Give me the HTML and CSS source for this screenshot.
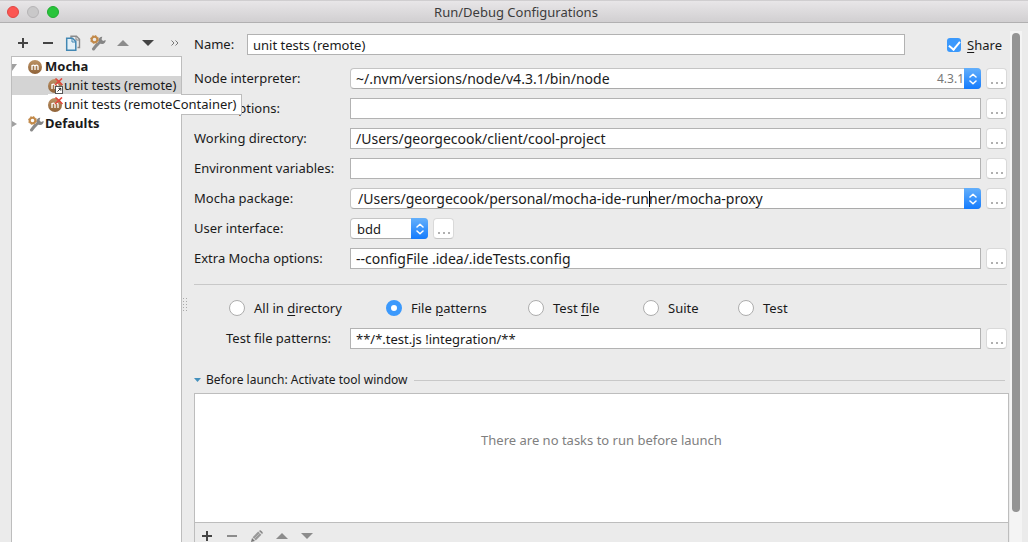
FILE: index.html
```html
<!DOCTYPE html>
<html lang="en">
<head>
<meta charset="utf-8">
<title>Run/Debug Configurations</title>
<link rel="stylesheet" href="styles.css">
</head>
<body>
<svg class="defs" aria-hidden="true">
  <defs>
    <linearGradient id="brown" x1="0" y1="0" x2="0" y2="1"><stop offset="0" stop-color="#bd9365"/><stop offset="1" stop-color="#8f6238"/></linearGradient>
    <symbol id="mocha" viewBox="0 0 14 14"><circle cx="7" cy="7" r="7" fill="url(#brown)"/><path d="M4 10V5M4 6.6Q4 5.2 5.4 5.2T7 6.6V10M7 6.6Q7 5.2 8.5 5.2T10 6.6V10" fill="none" stroke="#fff" stroke-width="1.3"/></symbol>
    <symbol id="mocha-x" viewBox="0 0 16 16"><circle cx="7" cy="8" r="7" fill="url(#brown)"/><path d="M4 11V6M4 7.6Q4 6.2 5.4 6.2T7 7.6V11M7 7.6Q7 6.2 8.500 6.2T10 7.6V11" fill="none" stroke="#fff" stroke-width="1.3"/><path d="M7.500 .5L14.500 7M14 .5L7 7" stroke="#e0463c" stroke-width="1.600"/></symbol>
    <symbol id="tools" viewBox="0 0 16 16"><path d="M7 9.500L3.500 14" stroke="#8a8a8a" stroke-width="3" stroke-linecap="round"/><path d="M6.500 10.500L11.500 5.500" stroke="#8a8a8a" stroke-width="2.600"/><path d="M15.600 5A3.600 3.600 0 1 1 12.300 1.800L11.500 4.300L13 5.900Z" fill="#858585"/><circle cx="4.500" cy="4.500" r="2.800" fill="none" stroke="#c28a4a" stroke-width="2"/><circle cx="4.500" cy="4.500" r="4" fill="none" stroke="#c28a4a" stroke-width="1" stroke-dasharray="1.600 1.540"/></symbol>
    <symbol id="plus" viewBox="0 0 10 10"><path d="M5 0V10M0 5H10" stroke="currentColor" stroke-width="2"/></symbol>
    <symbol id="minus" viewBox="0 0 10 10"><path d="M0 5H10" stroke="currentColor" stroke-width="2"/></symbol>
    <symbol id="up" viewBox="0 0 12 6"><path d="M6 0L12 6H0Z" fill="currentColor"/></symbol>
    <symbol id="down" viewBox="0 0 12 6"><path d="M0 0H12L6 6Z" fill="currentColor"/></symbol>
    <symbol id="updown" viewBox="0 0 8 12"><path d="M1 4L4 1.200L7 4M1 8L4 10.800L7 8" fill="none" stroke="#fff" stroke-width="1.500" stroke-linecap="round" stroke-linejoin="round"/></symbol>
  </defs>
</svg>
<div class="window">
  <header class="titlebar">
    <div class="lights"><button class="light red" aria-label="Close"></button><button class="light off" aria-label="Minimize" disabled></button><button class="light green" aria-label="Zoom"></button></div>
    <h1 class="title">Run/Debug Configurations</h1>
  </header>
  <div class="content">
    <aside class="sidebar">
      <div class="toolbar">
        <button class="tool" aria-label="Add"><svg class="i10"><use href="#plus"/></svg></button>
        <button class="tool" aria-label="Remove"><svg class="i10"><use href="#minus"/></svg></button>
        <button class="tool" aria-label="Copy"><svg class="i16" viewBox="0 0 16 16"><path d="M6 3V1.200H11.500L14.500 4.200V12.500H12.500" fill="none" stroke="#8b8b8b" stroke-width="1.400"/><path d="M11 1.500V5H14.500" fill="none" stroke="#8b8b8b"/><path d="M1.700 3.200H7.500L10.800 6.500V15.200H1.700Z" fill="#e4f0f7" stroke="#4287b3" stroke-width="1.500"/><path d="M7 3.500V7H10.500" fill="none" stroke="#4287b3"/></svg></button>
        <button class="tool" aria-label="Edit defaults"><svg class="i16"><use href="#tools"/></svg></button>
        <button class="tool dim" aria-label="Move up"><svg class="arrow"><use href="#up"/></svg></button>
        <button class="tool" aria-label="Move down"><svg class="arrow"><use href="#down"/></svg></button>
        <button class="tool more" aria-label="More"><svg class="chev" viewBox="0 0 8 6"><path d="M.5 .5L3 3L.5 5.500M4.500 .5L7 3L4.500 5.500" fill="none" stroke="#777"/></svg></button>
      </div>
      <ul class="tree">
        <li class="node bold"><svg class="twist" viewBox="0 0 6 8"><path d="M0 1H5L0 8Z" fill="#a0a0a0"/></svg><svg class="i14"><use href="#mocha"/></svg><span>Mocha</span></li>
        <li class="node child selected"><svg class="i16" viewBox="0 0 16 16"><use href="#mocha-x" width="16" height="16"/><rect x="7.500" y="8.500" width="7" height="7" fill="#fff" stroke="#555"/><path d="M9.500 13.500L13 10M10.500 10.300H12.800V12.600" fill="none" stroke="#333"/></svg><span>unit tests (remote)</span></li>
        <li class="node child"><div class="overflow"><svg class="i16"><use href="#mocha-x"/></svg><span>unit tests (remoteContainer)</span></div></li>
        <li class="node bold"><svg class="twist" viewBox="0 0 6 8"><path d="M0 1L5 4L0 7Z" fill="#a0a0a0"/></svg><svg class="i16 wrench"><use href="#tools"/></svg><span>Defaults</span></li>
      </ul>
    </aside>
    <div class="grip" aria-hidden="true"></div>
    <main class="editor">
      <div class="row name-row">
        <label class="name-label" for="name">Name:</label>
        <input class="field" id="name" type="text" value="unit tests (remote)">
        <div class="share"><input class="check" type="checkbox" id="share" checked><label for="share"><u>S</u>hare</label></div>
      </div>
      <div class="form">
        <div class="row"><label class="label" for="node">Node interpreter:</label><div class="combo"><input id="node" type="text" value="~/.nvm/versions/node/v4.3.1/bin/node"><span class="version">4.3.1</span><button class="stepper" aria-label="Choose interpreter"><svg><use href="#updown"/></svg></button></div><button class="browse" aria-label="Browse interpreter"><i></i><i></i><i></i></button></div>
        <div class="row"><label class="label" for="opts">Node options:</label><input class="field" id="opts" type="text"><button class="browse" aria-label="Edit options"><i></i><i></i><i></i></button></div>
        <div class="row"><label class="label" for="dir">Working directory:</label><input class="field" id="dir" type="text" value="/Users/georgecook/client/cool-project"><button class="browse" aria-label="Browse directory"><i></i><i></i><i></i></button></div>
        <div class="row"><label class="label" for="env">Environment variables:</label><input class="field" id="env" type="text"><button class="browse" aria-label="Edit variables"><i></i><i></i><i></i></button></div>
        <div class="row"><label class="label" for="pkg">Mocha package:</label><div class="combo wide-pad"><input id="pkg" type="text" value="/Users/georgecook/personal/mocha-ide-runner/mocha-proxy"><span class="caret"></span><button class="stepper" aria-label="Choose package"><svg><use href="#updown"/></svg></button></div><button class="browse" aria-label="Browse package"><i></i><i></i><i></i></button></div>
        <div class="row"><label class="label" for="ui">User interface:</label><div class="combo small"><select id="ui"><option>bdd</option></select><span class="stepper"><svg><use href="#updown"/></svg></span></div><button class="browse" aria-label="Browse interface"><i></i><i></i><i></i></button></div>
        <div class="row"><label class="label" for="extra">Extra Mocha options:</label><input class="field" id="extra" type="text" value="--configFile .idea/.ideTests.config"><button class="browse" aria-label="Edit Mocha options"><i></i><i></i><i></i></button></div>
      </div>
      <hr class="rule">
      <div class="radios">
        <label class="choice"><input type="radio" name="scope"><span>All in <u>d</u>irectory</span></label>
        <label class="choice"><input type="radio" name="scope" checked><span>File <u>p</u>atterns</span></label>
        <label class="choice"><input type="radio" name="scope"><span>Test <u>f</u>ile</span></label>
        <label class="choice"><input type="radio" name="scope"><span>Suite</span></label>
        <label class="choice"><input type="radio" name="scope"><span>Test</span></label>
      </div>
      <div class="row"><label class="label indent" for="pat">Test file patterns:</label><input class="field" id="pat" type="text" value="**/*.test.js !integration/**"><button class="browse" aria-label="Edit patterns"><i></i><i></i><i></i></button></div>
      <section class="launch">
        <h2 class="launch-title"><svg class="fold" viewBox="0 0 7 4"><path d="M0 0H7L3.500 4Z" fill="#4390bd"/></svg><span>Before launch: Activate tool window</span></h2>
        <div class="tasks">
          <p class="empty">There are no tasks to run before launch</p>
          <div class="task-tools">
            <button class="tool" aria-label="Add task"><svg class="i10"><use href="#plus"/></svg></button>
            <button class="tool dim" aria-label="Remove task"><svg class="i10"><use href="#minus"/></svg></button>
            <button class="tool dim" aria-label="Edit task"><svg class="i12" viewBox="0 0 12 12"><path d="M0 12L1 8L4 11Z" fill="#777"/><path d="M1.600 7.200L7.200 1.600L10.400 4.800L4.800 10.400Z" fill="#999"/><path d="M3.200 8.800L8.800 3.200" stroke="#bbb"/><path d="M8 .9Q9.200-.3 10.400.9L11.200 1.700Q12.300 2.900 11.100 4.100Z" fill="#888"/></svg></button>
            <button class="tool dim" aria-label="Task up"><svg class="arrow"><use href="#up"/></svg></button>
            <button class="tool dim" aria-label="Task down"><svg class="arrow"><use href="#down"/></svg></button>
          </div>
        </div>
      </section>
    </main>
    <div class="scrollbar" aria-hidden="true"><div class="thumb"></div></div>
  </div>
</div>
</body>
</html>
```

FILE: styles.css
```css
* { box-sizing: border-box; }
body { margin: 0; background: #ebebeb; color: #1a1a1a; font: 13px/16px "Noto Sans", sans-serif; overflow: hidden; }
button, input, select { font: inherit; color: inherit; margin: 0; padding: 0; border: 0; background: none; outline: none; }
svg { display: block; flex: none; }
u { text-underline-offset: 2px; }
.defs { position: absolute; width: 0; height: 0; }
.window { display: flex; flex-direction: column; height: 100vh; }

.titlebar { position: relative; flex: none; height: 23px; padding-left: 4px; display: flex; align-items: center; justify-content: center; border-top: 1px solid #d0ced0; border-bottom: 1px solid #b1b0b1; background: linear-gradient(#e8e6e8, #d1cfd1); }
.title { margin: 0; font-size: 13px; font-weight: 400; color: #3c3c3c; }
.lights { position: absolute; left: 7px; display: flex; gap: 8px; }
.light { width: 12px; height: 12px; border-radius: 50%; border: 1px solid; }
.red { background: #fc5652; border-color: #df4744; }
.off { background: #c9c8c9; border-color: #b6b4b6; }
.green { background: #29c43b; border-color: #1fab2f; }

.content { flex: 1; min-height: 0; display: flex; padding-right: 6px; }
.sidebar { flex: none; width: 182px; padding-left: 11px; display: flex; flex-direction: column; }
.toolbar { height: 33px; padding-top: 7px; display: flex; align-items: center; flex: none; }
.tool { width: 25px; height: 16px; padding-right: 2px; display: flex; align-items: center; justify-content: center; color: #444; flex: none; }
.dim { color: #8c8c8c; }
.more { width: 20px; justify-content: flex-end; }
.i10 { width: 10px; height: 10px; }
.i12 { width: 12px; height: 12px; }
.i14 { width: 14px; height: 14px; }
.i16 { width: 16px; height: 16px; }
.arrow { width: 12px; height: 6px; }
.chev { width: 8px; height: 6px; }
.tree { flex: 1; margin: 0; padding: 0; list-style: none; background: #fff; border: 1px solid #bdbdbd; border-bottom: 0; }
.node { position: relative; height: 19px; display: flex; align-items: center; white-space: nowrap; }
.node span, .label, .name-label { padding-bottom: 2px; }
.bold { font-weight: 700; gap: 3px; }
.twist { width: 6px; height: 8px; margin-right: 7px; }
.wrench { margin-right: -2px; }
.child { padding-left: 36px; }
.selected { background: #d4d4d4; }
.overflow { position: absolute; z-index: 2; left: 36px; top: -1px; height: 21px; display: flex; align-items: center; background: #fff; padding-right: 5px; }
.overflow::after { content: ""; position: absolute; left: 133px; right: 0; top: 0; bottom: 0; border: 1px solid #bdbdbd; border-left: 0; }

.grip { flex: none; align-self: center; width: 5px; height: 16px; margin-top: 44px; background: radial-gradient(circle, #aaa 1px, transparent 1px) 0 0 / 3px 3px; }
.editor { flex: 1; min-width: 0; padding: 11px 1px 0 7px; }
.row { display: flex; align-items: center; height: 21px; padding-right: 2px; gap: 5px; }
.name-row { gap: 0; margin-bottom: 13px; padding-right: 7px; }
.name-label { width: 53px; }
.share { display: flex; align-items: center; gap: 6px; margin-left: 42px; }
.form { display: grid; gap: 9px; }
.form input { font-size: 14px; line-height: 19px; }
.label { width: 151px; flex: none; white-space: nowrap; }
.indent { padding-left: 32px; }
.field { flex: 1; min-width: 0; height: 21px; padding: 0 5px; background: #fff; border: 1px solid #b2b2b2; }
.combo { position: relative; flex: 1; min-width: 0; height: 21px; display: flex; align-items: center; background: #fff; border: 1px solid #c4c4c4; border-bottom-color: #aaa; border-radius: 4px; padding-left: 5px; }
.combo input, .combo select { flex: 1; min-width: 0; height: 19px; }
.wide-pad { padding-left: 7px; }
.combo select { appearance: none; }
.small { flex: none; width: 78px; padding-left: 6px; }
.version { color: #777; font-size: 12px; margin-right: 1px; }
.stepper { flex: none; width: 17px; height: 21px; margin: -1px; display: flex; align-items: center; justify-content: center; background: linear-gradient(#64b0fb, #147bfd); border-radius: 0 4px 4px 0; pointer-events: none; }
.stepper svg { width: 8px; height: 12px; }
.caret { position: absolute; left: 298px; top: 2px; width: 1px; height: 16px; background: #000; }
.browse { flex: none; width: 21px; height: 21px; display: flex; justify-content: center; align-items: flex-end; gap: 3px; padding-bottom: 4px; background: #fff; border: 1px solid #d9d9d9; border-bottom-color: #c4c4c4; border-radius: 4px; }
.browse i { width: 2px; height: 2px; background: #b0b0b0; }
.check { appearance: none; width: 14px; height: 14px; border-radius: 3px; background: #3b99fc; display: flex; justify-content: center; }
.check::before { content: ""; width: 5px; height: 9px; margin-top: 1px; border: solid #fff; border-width: 0 2px 2px 0; transform: rotate(40deg); }
.rule { margin: 15px 2px 15px 0; border: 0; border-top: 1px solid #c8c8c8; }
.radios { display: grid; grid-template-columns: 157px 142px 115px 95px auto; margin: 0 0 12px 35px; }
.choice { display: flex; align-items: center; gap: 9px; white-space: nowrap; }
.choice input { appearance: none; width: 16px; height: 16px; border-radius: 50%; border: 1px solid #adadad; background: #fff; }
.choice input:checked { border: 5px solid #3b99fc; }
.launch { margin-top: 23px; }
.launch-title { display: flex; align-items: center; gap: 5px; margin: 0 4px 5px 0; font-size: 12px; font-weight: 400; }
.launch-title::after { content: ""; flex: 1; border-top: 1px solid #c8c8c8; margin-left: 2px; }
.fold { width: 7px; height: 4px; }
.tasks { background: #fff; border: 1px solid #bdbdbd; }
.empty { height: 128px; margin: 0; padding-top: 38px; text-align: center; color: #808080; }
.task-tools { height: 26px; display: flex; align-items: center; background: #ebebeb; border-top: 1px solid #bdbdbd; }
.scrollbar { flex: none; width: 12px; margin-top: 8px; padding: 2px 2px 30px; background: #f4f4f4; }
.thumb { height: 100%; border-radius: 4px; background: #949494; }
```
